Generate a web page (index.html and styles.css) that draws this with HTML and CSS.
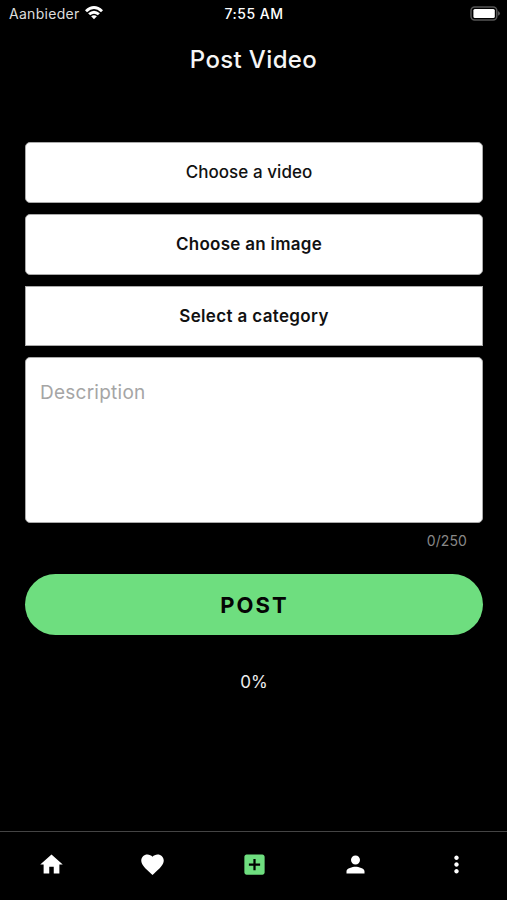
FILE: index.html
```html
<!DOCTYPE html>
<html lang="en">
<head>
<meta charset="utf-8">
<title>Post Video</title>
<link rel="stylesheet" href="styles.css">
</head>
<body>
<div class="screen">
  <header class="status">
    <div class="carrier"><span>Aanbieder</span>
      <svg class="wifi" viewBox="0 0 18 14" width="18" height="14"><path d="M0 4.2Q9-4 18 4.2L16 6.2Q9 0 2 6.2Z M3.1 7.3Q9 2 14.9 7.3L12.9 9.3Q9 6 5.1 9.3Z M6.1 10.3Q9 8 11.9 10.3L9 13.2Z"/></svg>
    </div>
    <span class="clock">7:55 AM</span>
    <svg class="battery" viewBox="0 0 31 15" width="31" height="15"><rect class="shell" x="1" y=".9" width="25.8" height="13" rx="3.6"/><rect class="charge" x="3.4" y="2.9" width="21.4" height="9" rx="1.5"/><path class="tip" d="M28 5q4 2.4 0 4.8z"/></svg>
  </header>
  <h1 class="title">Post Video</h1>
  <main class="form">
    <button class="field video"><span>Choose a video</span></button>
    <button class="field image"><span>Choose an image</span></button>
    <button class="field category"><span>Select a category</span></button>
    <div class="description"><span>Description</span></div>
    <div class="counter"><span>0/250</span></div>
    <button class="post"><span>POST</span></button>
    <div class="progress"><span>0%</span></div>
  </main>
  <nav class="tabs">
    <a class="tab"><svg viewBox="0 0 24 24"><path d="M10 20v-6h4v6h5v-8h3L12 3 2 12h3v8z"/></svg></a>
    <a class="tab"><svg viewBox="0 0 24 24"><path d="M12 21.35l-1.45-1.32C5.4 15.36 2 12.28 2 8.5 2 5.42 4.42 3 7.5 3c1.74 0 3.41.81 4.5 2.09C13.09 3.81 14.76 3 16.5 3 19.58 3 22 5.42 22 8.5c0 3.78-3.4 6.86-8.55 11.54L12 21.35z"/></svg></a>
    <a class="tab active"><svg viewBox="0 0 24 24"><path d="M19 3H5c-1.11 0-2 .9-2 2v14c0 1.1.89 2 2 2h14c1.1 0 2-.9 2-2V5c0-1.1-.9-2-2-2zm-2 10h-4v4h-2v-4H7v-2h4V7h2v4h4v2z"/></svg></a>
    <a class="tab"><svg viewBox="0 0 24 24"><path d="M12 12c2.21 0 4-1.79 4-4s-1.79-4-4-4-4 1.79-4 4 1.79 4 4 4zm0 2c-2.67 0-8 1.34-8 4v2h16v-2c0-2.66-5.33-4-8-4z"/></svg></a>
    <a class="tab"><svg viewBox="0 0 24 24"><path d="M12 8c1.1 0 2-.9 2-2s-.9-2-2-2-2 .9-2 2 .9 2 2 2zm0 2c-1.1 0-2 .9-2 2s.9 2 2 2 2-.9 2-2-.9-2-2-2zm0 6c-1.1 0-2 .9-2 2s.9 2 2 2 2-.9 2-2-.9-2-2-2z"/></svg></a>
  </nav>
</div>
</body>
</html>
```
FILE: styles.css
```css
* { box-sizing: border-box; }
body { margin: 0; background: #000; font-family: Inter, "Liberation Sans", sans-serif; }
button { border: 0; padding: 0; font: inherit; color: inherit; }
span { white-space: nowrap; }
.screen { width: 507px; height: 900px; display: flex; flex-direction: column; background: #000; color: #fff; overflow: hidden; }
.status { height: 27px; display: grid; grid-template-columns: 1fr auto 1fr; align-items: center; padding: 0 6px 0 9px; font-size: 14px; line-height: 18px; }
.carrier { display: flex; align-items: center; gap: 5px; color: #ddd; letter-spacing: .3px; }
.wifi { fill: #fff; margin-top: -1px; }
.clock { font-weight: 500; letter-spacing: .5px; margin-left: -2px; }
.battery { justify-self: end; }
.shell { fill: none; stroke: #555; stroke-width: 1.5; }
.charge { fill: #fff; }
.tip { fill: #555; }
.title { margin: 17px 0 0; height: 32px; text-align: center; font-size: 24px; line-height: 32px; font-weight: 500; letter-spacing: .36px; color: #f5f5f5; }
.form { flex: 1; display: flex; flex-direction: column; padding: 66px 24px 0 25px; }
.field { height: 61px; margin-bottom: 11px; background: #fff; color: #111; border: 1px solid #aaa; border-radius: 5px; font-size: 17px; line-height: 24px; font-weight: 600; letter-spacing: .27px; padding: 0 10px 1px 0; }
.video { font-weight: 500; letter-spacing: .05px; }
.category { height: 60px; border-radius: 0; padding: 0; letter-spacing: .35px; }
.description { height: 166px; padding: 21px 14px; background: #fff; border: 1px solid #aaa; border-radius: 5px; color: #a5a5a5; font-size: 19px; line-height: 28px; letter-spacing: .25px; }
.counter { height: 51px; padding: 8px 16px 0; text-align: right; color: #888; font-size: 14px; line-height: 20px; letter-spacing: .1px; }
.post { height: 61px; border-radius: 31px; background: #6ede7f; color: #050505; font-size: 22px; font-weight: 700; letter-spacing: 2px; padding: 1px 0 0 1px; }
.progress { padding-top: 35px; text-align: center; color: #eee; font-size: 17px; line-height: 24px; }
.tabs { height: 69px; display: flex; border-top: 1px solid #444; padding: 19px 0 0 1px; }
.tab { flex: 1; display: flex; justify-content: center; align-items: flex-start; }
.tab svg { width: 27px; height: 27px; fill: #fff; }
.active svg { fill: #6ede7f; }
```
